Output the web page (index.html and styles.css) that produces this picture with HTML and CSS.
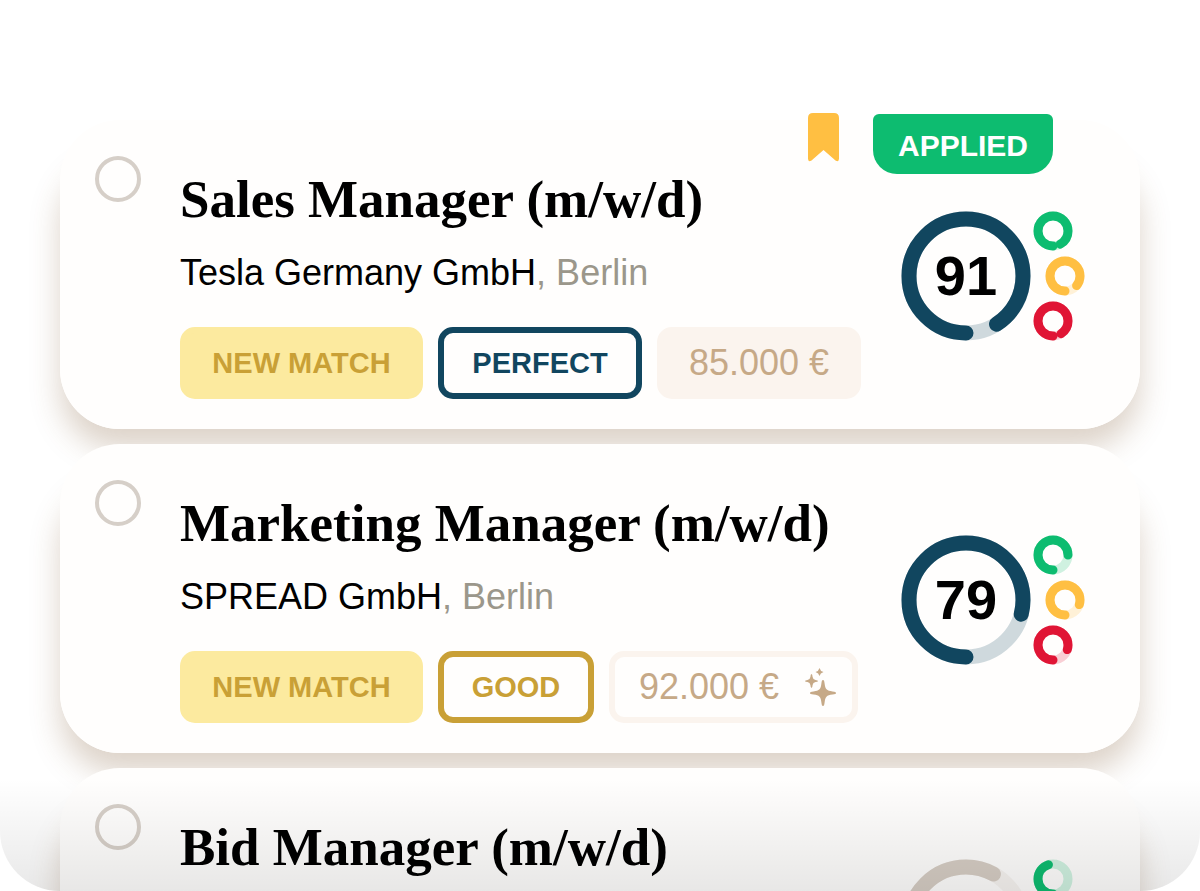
FILE: index.html
```html
<!DOCTYPE html>
<html lang="en">
<head>
<meta charset="utf-8">
<meta name="viewport" content="width=device-width, initial-scale=1">
<title>Job matches</title>
<link rel="stylesheet" href="styles.css">
</head>
<body>
<main class="panel">
  <div class="job-list">
    <article class="card">
      <div class="flags">
        <svg class="bookmark" viewBox="0 0 31 49" aria-hidden="true"><path d="M5 0H26Q31 0 31 5V45.500Q31 49.500 27.500 47.500L15.500 37L3.500 47.500Q0 49.500 0 45.500V5Q0 0 5 0Z"/></svg>
        <span class="applied">APPLIED</span>
      </div>
      <input class="pick" type="checkbox" aria-label="Select Sales Manager">
      <div class="info">
        <h2 class="title">Sales Manager (m/w/d)</h2>
        <p class="company">Tesla Germany GmbH<span class="place">, Berlin</span></p>
        <div class="tags">
          <span class="tag tag-new">NEW MATCH</span>
          <span class="tag tag-perfect">PERFECT</span>
          <span class="tag tag-pay">85.000 €</span>
        </div>
      </div>
      <div class="scores">
        <div class="total">
          <svg class="ring ring-big navy" viewBox="0 0 130 130"><circle class="track" cx="65" cy="65" r="57"/><circle class="arc" cx="65" cy="65" r="57" pathLength="100" stroke-dasharray="91 100"/></svg>
          <span class="value">91</span>
        </div>
        <div class="parts">
          <svg class="ring green" viewBox="0 0 40 40"><circle class="track" cx="20" cy="20" r="15"/><circle class="arc" cx="20" cy="20" r="15" pathLength="100" stroke-dasharray="92 100"/></svg>
          <svg class="ring amber" viewBox="0 0 40 40"><circle class="track" cx="20" cy="20" r="15"/><circle class="arc" cx="20" cy="20" r="15" pathLength="100" stroke-dasharray="86 100"/></svg>
          <svg class="ring red" viewBox="0 0 40 40"><circle class="track" cx="20" cy="20" r="15"/><circle class="arc" cx="20" cy="20" r="15" pathLength="100" stroke-dasharray="91 100"/></svg>
        </div>
      </div>
    </article>

    <article class="card">
      <input class="pick" type="checkbox" aria-label="Select Marketing Manager">
      <div class="info">
        <h2 class="title">Marketing Manager (m/w/d)</h2>
        <p class="company">SPREAD GmbH<span class="place">, Berlin</span></p>
        <div class="tags">
          <span class="tag tag-new">NEW MATCH</span>
          <span class="tag tag-good">GOOD</span>
          <span class="tag tag-estimate">92.000 €
            <svg class="sparkles" viewBox="0 0 31 38" aria-hidden="true"><path d="M18 12C19 12 19.300 13 19.600 15.500C20 18.500 20.300 20 21.500 21.300C22.800 22.600 24.500 23 27.500 23.400C30 23.700 31 24 31 25C31 26 30 26.300 27.500 26.600C24.500 27 22.800 27.400 21.500 28.700C20.300 30 20 31.500 19.600 34.500C19.300 37 19 38 18 38C17 38 16.700 37 16.400 34.500C16 31.500 15.700 30 14.500 28.700C13.200 27.400 11.500 27 8.500 26.600C6 26.300 5 26 5 25C5 24 6 23.700 8.500 23.400C11.500 23 13.200 22.600 14.500 21.300C15.700 20 16 18.500 16.400 15.500C16.700 13 17 12 18 12Z"/><path d="M6.500 6Q7.400 6 7.600 9Q7.900 11.600 10.500 11.900Q13 12.200 13 13Q13 13.800 10.500 14.100Q7.900 14.400 7.600 17Q7.400 20 6.500 20Q5.600 20 5.400 17Q5.100 14.400 2.500 14.100Q0 13.800 0 13Q0 12.200 2.500 11.900Q5.100 11.600 5.400 9Q5.600 6 6.500 6Z"/><path d="M14.500 0Q15.200 3.100 18.500 4Q15.200 4.900 14.500 8Q13.800 4.900 10.500 4Q13.800 3.100 14.500 0Z"/></svg>
          </span>
        </div>
      </div>
      <div class="scores">
        <div class="total">
          <svg class="ring ring-big navy" viewBox="0 0 130 130"><circle class="track" cx="65" cy="65" r="57"/><circle class="arc" cx="65" cy="65" r="57" pathLength="100" stroke-dasharray="79 100"/></svg>
          <span class="value">79</span>
        </div>
        <div class="parts">
          <svg class="ring green" viewBox="0 0 40 40"><circle class="track" cx="20" cy="20" r="15"/><circle class="arc" cx="20" cy="20" r="15" pathLength="100" stroke-dasharray="75 100"/></svg>
          <svg class="ring amber" viewBox="0 0 40 40"><circle class="track" cx="20" cy="20" r="15"/><circle class="arc" cx="20" cy="20" r="15" pathLength="100" stroke-dasharray="80 100"/></svg>
          <svg class="ring red" viewBox="0 0 40 40"><circle class="track" cx="20" cy="20" r="15"/><circle class="arc" cx="20" cy="20" r="15" pathLength="100" stroke-dasharray="80 100"/></svg>
        </div>
      </div>
    </article>

    <article class="card card-last">
      <input class="pick" type="checkbox" aria-label="Select Bid Manager">
      <div class="info">
        <h2 class="title">Bid Manager (m/w/d)</h2>
      </div>
      <div class="scores">
        <div class="total">
          <svg class="ring ring-big stone" viewBox="0 0 130 130"><circle class="track" cx="65" cy="65" r="57"/><circle class="arc" cx="65" cy="65" r="57" pathLength="100" stroke-dasharray="58 100"/></svg>
        </div>
        <div class="parts">
          <svg class="ring green" viewBox="0 0 40 40"><circle class="track" cx="20" cy="20" r="15"/><circle class="arc" cx="20" cy="20" r="15" pathLength="100" stroke-dasharray="45 100"/></svg>
        </div>
      </div>
    </article>
  </div>
</main>
</body>
</html>
```
FILE: styles.css
```css
* {
  box-sizing: border-box;
}

body {
  margin: 0;
  background: #fff;
  color: #000;
  font-family: "Liberation Sans", Arial, sans-serif;
}

.panel {
  position: relative;
  isolation: isolate;
  height: 100vh;
  padding: 120px 60px 0;
  overflow: hidden;
  border-radius: 0 0 60px 60px;
}

/* Fade over the foot of the list */
.panel::after {
  content: "";
  position: absolute;
  inset: auto 0 0;
  height: 112px;
  background: linear-gradient(rgba(0, 0, 0, 0), rgba(0, 0, 0, 0.09));
  pointer-events: none;
}

.job-list {
  display: grid;
  gap: 15px;
}

.card {
  position: relative;
  display: flex;
  align-items: flex-start;
  padding: 36px 55px 30px 35px;
  border-radius: 60px;
  background: #fffefd;
}

/* Shadows sit below every card, so none falls on a neighbour */
.card::before {
  content: "";
  position: absolute;
  inset: 24px 0 0;
  z-index: -1;
  border-radius: 60px;
  box-shadow: 0 20px 30px rgba(120, 80, 40, 0.25);
}

.card-last {
  min-height: 309px;
}

.pick {
  appearance: none;
  flex: none;
  width: 46px;
  height: 46px;
  margin: 0 39px 0 0;
  border: 4px solid #d6cfc8;
  border-radius: 50%;
}

.info {
  flex: 1;
  min-width: 0;
  padding-top: 13px;
}

.title {
  margin: 0 0 23px;
  font: bold 53px/60px "Liberation Serif", "Times New Roman", serif;
  white-space: nowrap;
}

.company {
  margin: 0 0 33px;
  font-size: 36px;
  line-height: 42px;
}

.place {
  color: #9b978b;
}

.tags {
  display: flex;
  gap: 15px;
}

.tag {
  display: flex;
  align-items: center;
  justify-content: center;
  height: 72px;
  padding: 0 24px;
  border: 6px solid;
  border-radius: 15px;
  font-size: 29px;
  font-weight: bold;
  white-space: nowrap;
}

.tag-new {
  min-width: 243px;
  border-color: #fcea9f;
  background: #fcea9f;
  color: #c9a036;
}

.tag-perfect {
  min-width: 204px;
  border-color: #11465f;
  color: #11465f;
}

.tag-good {
  min-width: 156px;
  border-color: #c9a036;
  color: #c9a036;
}

.tag-pay,
.tag-estimate {
  min-width: 204px;
  border-color: #fbf4ee;
  color: #c6a987;
  font-size: 36px;
  font-weight: normal;
}

.tag-pay {
  background: #fbf4ee;
}

.tag-estimate {
  gap: 26px;
  padding-right: 16px;
}

.sparkles {
  width: 31px;
  height: 38px;
  fill: #c6a987;
}

.scores {
  display: flex;
  flex: none;
  gap: 2px;
  width: 184px;
  margin-top: 55px;
}

.total {
  display: grid;
  place-items: center;
}

.total > * {
  grid-area: 1 / 1;
}

.value {
  font-size: 56px;
  font-weight: bold;
  line-height: 60px;
}

.parts {
  display: grid;
  gap: 5px;
  align-content: start;
}

.ring {
  display: block;
  width: 40px;
  height: 40px;
  fill: none;
  stroke: currentColor;
  stroke-width: 9px;
  transform: rotate(90deg);
}

.ring-big {
  width: 130px;
  height: 130px;
  stroke-width: 15px;
}

.track {
  opacity: 0.2;
}

.arc {
  stroke-linecap: round;
}

.navy {
  color: #11465f;
}

.green {
  color: #0dbc70;
}

.amber {
  margin-left: 12px;
  color: #ffbf42;
}

.red {
  color: #e01535;
}

.stone {
  color: #d6cdc4;
}

.flags {
  position: absolute;
  top: -7px;
  right: 87px;
  display: flex;
  align-items: flex-start;
  gap: 34px;
}

.bookmark {
  width: 31px;
  height: 49px;
  fill: #ffbf42;
}

.applied {
  width: 180px;
  height: 60px;
  margin-top: 1px;
  border-radius: 6px 6px 24px 24px;
  background: #0dbc70;
  color: #fff;
  font-size: 30px;
  font-weight: bold;
  line-height: 64px;
  text-align: center;
}
```
